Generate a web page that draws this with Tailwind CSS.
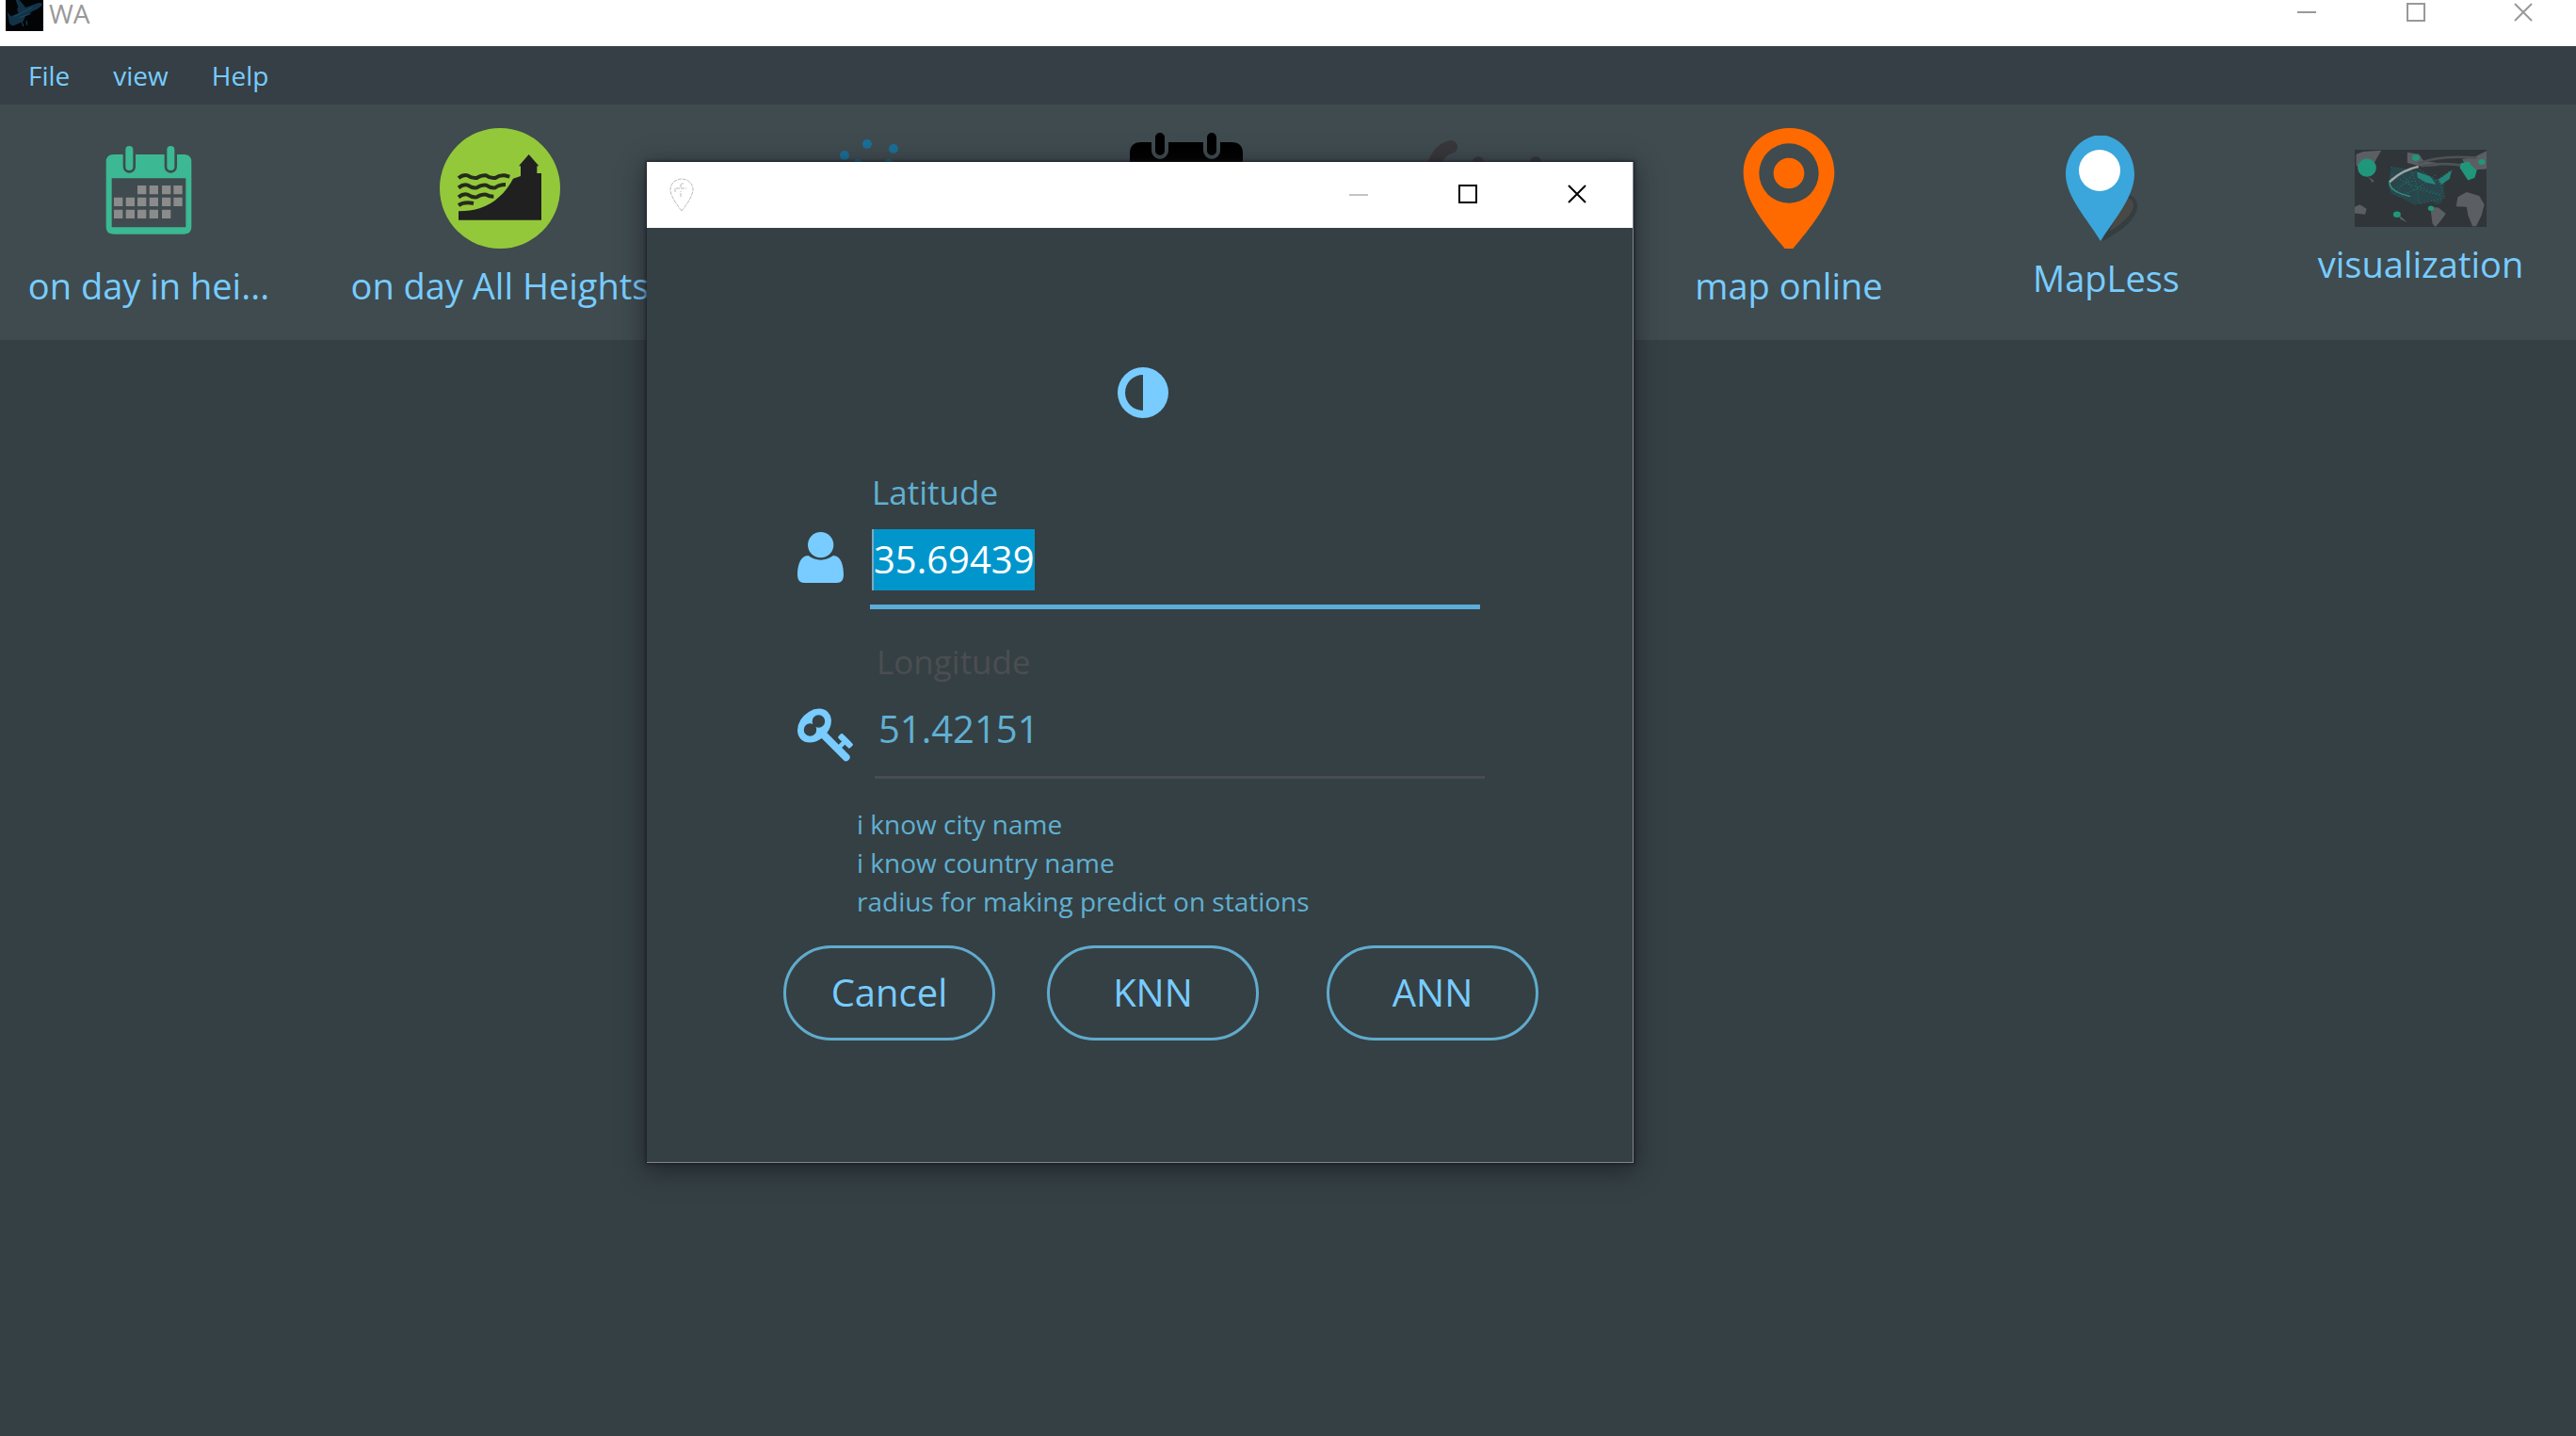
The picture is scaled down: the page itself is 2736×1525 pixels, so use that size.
<!DOCTYPE html>
<html lang="en">
<head>
<meta charset="utf-8">
<title>WA</title>
<script src="https://cdn.jsdelivr.net/npm/@tailwindcss/browser@4"></script>
</head>
<body class="min-h-screen overflow-x-hidden bg-[#354044] font-['Open_Sans','Noto_Sans',sans-serif] text-[#78ccff]">

<header class="flex h-[49px] items-start justify-between overflow-hidden bg-white text-[#999]">
  <div class="flex items-start gap-[6px] pl-[6px]">
    <svg class="h-[33px] w-[40px]" viewBox="0 0 120 99" aria-hidden="true">
      <rect width="120" height="99" fill="#020405"/>
      <path d="M5 38l12 14 24-10-5-12 4-8-8-22h12l20 24 38-14q16-4 14 4-3 10-30 22l-22 14-8 18-30 14q-10 0-14-8z" fill="#123247"/>
      <path d="M28 52l58-28M44 56l36-12M52 70l4 14M66 66l2 14" stroke="#1e4b63" stroke-width="3" fill="none"/>
    </svg>
    <h1 class="text-[28px] leading-[29px]">WA</h1>
  </div>
  <div class="flex">
    <button aria-label="Minimize" class="flex h-[26px] w-[116px] items-center justify-center"><svg class="h-5 w-5" viewBox="0 0 20 20" fill="none" stroke="currentColor" stroke-width="2"><path d="M0 10h20"/></svg></button>
    <button aria-label="Maximize" class="flex h-[26px] w-[116px] items-center justify-center"><svg class="h-5 w-5" viewBox="0 0 20 20" fill="none" stroke="currentColor" stroke-width="2"><path d="M1 1h18v18H1z"/></svg></button>
    <button aria-label="Close" class="flex h-[26px] w-[112px] items-center justify-center"><svg class="h-5 w-5" viewBox="0 0 20 20" fill="none" stroke="currentColor" stroke-width="2"><path d="M1 1l18 18M19 1L1 19"/></svg></button>
  </div>
</header>

<nav class="flex h-[62px] items-center gap-[46px] bg-[#363f45] pl-[30px] text-[28px]">
  <button>File</button>
  <button>view</button>
  <button>Help</button>
</nav>

<section aria-label="Tools" class="grid h-[250px] grid-cols-[316fr_430fr_352fr_324fr_310fr_336fr_338fr_330fr] items-center justify-items-center bg-[#3f4b4f] text-[38px] leading-[54px] whitespace-nowrap">
  <button class="flex flex-col items-center gap-3 pb-[6px]">
    <svg class="h-[128px] w-[128px]" viewBox="0 0 384 384" aria-hidden="true">
      <path fill-rule="evenodd" fill="#3cb892" d="M80 84h224q24 0 24 24v208q0 22-24 22H80q-24 0-24-22V108q0-24 24-24zM74 160v156h236V160z"/>
      <g stroke-linecap="round"><path d="M130 69v54M262 69v54" stroke="#3f4b4f" stroke-width="40"/><path d="M130 69v54M262 69v54" stroke="#3cb892" stroke-width="24"/></g>
      <path fill="#8b8b8b" d="M156 183h28v28h-28zM194 183h28v28h-28zM234 183h28v28h-28zM271 183h28v28h-28zM81 221h28v28H81zM119 221h28v28h-28zM156 221h28v28h-28zM194 221h28v28h-28zM234 221h28v28h-28zM271 221h28v28h-28zM81 260h28v28H81zM119 260h28v28h-28zM156 260h28v28h-28zM194 260h28v28h-28zM234 260h28v28h-28z"/>
    </svg>
    <span>on day in hei...</span>
  </button>
  <button class="flex flex-col items-center gap-3 pb-[6px]">
    <svg class="h-[128px] w-[128px]" viewBox="0 0 384 384" aria-hidden="true">
      <circle cx="192" cy="192" r="192" fill="#93c83a"/>
      <path fill="#202021" d="M60 265q84 0 132-48 24-22 42-56l24-8v-32h-6l32-37 32 37h-6v23h14v149H60z"/>
      <g fill="none" stroke="#262a1e" stroke-width="12"><path d="M60 159q15-12 29-8 14 10 29 8 15-10 30-8 14 10 29 8 15-10 30-8l16 4"/><path d="M60 190q15-12 29-8 14 10 29 8 15-10 30-8 14 10 29 8 12-10 33-10"/><path d="M60 220q15-12 29-8 14 10 29 8 15-10 30-8 10 6 24 6"/><path d="M60 246q18-12 48-6"/></g>
    </svg>
    <span>on day All Heights</span>
  </button>
  <button aria-label="Wind" class="pb-[72px]">
    <svg class="h-[128px] w-[128px]" viewBox="0 0 128 128" fill="#1b6f98" aria-hidden="true"><circle cx="39" cy="29" r="5"/><circle cx="63" cy="17" r="5"/><circle cx="91" cy="22" r="5"/><circle cx="53" cy="37" r="4"/><circle cx="86" cy="37" r="4"/><circle cx="106" cy="52" r="6"/><circle cx="22" cy="56" r="6"/></svg>
  </button>
  <button aria-label="Calendar" class="pb-[72px]">
    <svg class="h-[128px] w-[128px]" viewBox="0 0 128 128" aria-hidden="true">
      <path fill-rule="evenodd" d="M16 15h96q12 0 12 12v86q0 8-12 8H16q-12 0-12-8V27q0-12 12-12zM14 52v62h100V52z"/>
      <g stroke-linecap="round"><path d="M36 10v14M91 10v14" stroke="#3f4b4f" stroke-width="18"/><path d="M36 10v14M91 10v14" stroke="#000" stroke-width="10"/></g>
    </svg>
  </button>
  <button aria-label="Signal" class="pb-[72px]">
    <svg class="h-[128px] w-[128px]" viewBox="0 0 128 128" fill="#38383b" aria-hidden="true"><path d="M8 48Q12 24 28 20" fill="none" stroke="#38383b" stroke-width="14" stroke-linecap="round"/><circle cx="57" cy="36" r="6"/><circle cx="118" cy="36" r="6"/></svg>
  </button>
  <button class="flex flex-col items-center gap-3 pb-[6px]">
    <svg class="h-[128px] w-[128px]" viewBox="0 0 384 384" aria-hidden="true">
      <path fill-rule="evenodd" fill="#ff6a00" d="M160 4q34-8 68 0c66 14 109 72 109 138 0 84-74 174-132 242h-26C120 316 47 226 47 142 47 76 94 18 160 4zM192 49a95 95 0 1 0 0 190 95 95 0 0 0 0-190z"/>
      <circle cx="192" cy="144" r="49" fill="#ff6a00"/>
    </svg>
    <span>map online</span>
  </button>
  <button class="flex flex-col items-center gap-3 pb-[6px]">
    <svg class="h-[112px] w-[112px]" viewBox="0 0 112 112" aria-hidden="true">
      <path d="M71 62q18-1 18 14-2 18-37 36z" fill="#343e41"/><path d="M76 66q10 0 9 10-4 13-26 26z" fill="#484845"/>
      <path d="M44 0h12c18 4 30 22 30 41 0 24-22 49-36 71C37 90 13 65 13 41 13 22 26 4 44 0z" fill="#3aa6db"/>
      <ellipse cx="49" cy="37" rx="22" ry="22" fill="#fff"/>
    </svg>
    <span>MapLess</span>
  </button>
  <button class="flex flex-col items-center gap-3 pb-[6px]">
    <svg class="h-[82px] w-[140px]" viewBox="0 0 356 248" preserveAspectRatio="none" aria-hidden="true">
      <rect width="356" height="248" fill="#30353a"/>
      <g fill="#5b5f64"><path d="M4 14l20-8 48-4-14 28-8 20-30 16L4 50zM142 8l32 6 12 22 38 6v10l-44 2-38-12zM290 30l32-6 34-20v58l-50 4zM278 152l24-16 34 12 14 28-8 36-14 34h-10l-12-36-4-26-28-2zM204 184l22 2 20 20-14 22-14 20-8-10zM0 184l14-8 18 14-4 18-28-4zM36 86l16 14-4 6zM116 206l26 28-18-10z"/></g>
      <g fill="none" stroke="#4d5257"><path d="M172 44Q230 16 330 26M180 52q70-14 130 4" stroke-width="8"/></g>
      <path d="M98 56l54 8 40 14 24 16 14-2 16-4-4 28-6 50-12 10-18-12-20 6-24 8-34-22-28-14-10-24z" fill="#28464b"/>
      <g fill="none" stroke="#287067" stroke-width="3" stroke-dasharray="3 6"><path d="M98 56l54 10 14 42 8 66 70-20-16-50 36-38M100 80l44 30 90 34M98 130l50-28 90-4M110 140l60-80 50 40 40-34M124 72l36 60 60-52M118 150l50-24 74 24"/></g>
      <path d="M168 70l36 16 16 26-26-6-24-16zM226 96l36-30-6 28-22 18z" fill="#26857b"/>
      <path d="M94 104q32-38 78-50" fill="none" stroke="#a0a6a6" stroke-width="7"/>
      <path d="M94 104q-2 30 56 46" fill="none" stroke="#349485" stroke-width="4"/>
      <g fill="#20977a"><ellipse cx="33" cy="58" rx="25" ry="29"/><path d="M286 44l22-6 8 14 14 14-6 24-18 8-10-18-12-22z"/><circle cx="165" cy="26" r="10"/><circle cx="343" cy="39" r="9"/><circle cx="206" cy="188" r="8"/><circle cx="114" cy="208" r="10"/></g>
    </svg>
    <span>visualization</span>
  </button>
</section>

<div role="dialog" aria-label="Location" class="absolute top-[172px] left-[687px] w-[1048px] border-r border-b border-[#81878b] bg-[#354044] shadow-[0_6px_24px_2px_rgba(20,22,30,0.6),0_0_3px_1px_rgba(20,22,28,0.7)]">
  <div class="flex h-[70px] items-center justify-between bg-white text-black">
    <svg class="ml-[24px] h-[36px] w-[26px]" viewBox="0 0 26 36" fill="none" stroke="#b9b9b9" stroke-width="1" stroke-dasharray="4 1" aria-hidden="true"><path d="M13 35Q1 20 1 12 2 2 13 1q11 1 12 11 0 8-12 23z"/><path d="M6 15v-4h12M12 20V14M12 10V6h3"/></svg>
    <div class="flex pb-[2px]">
      <button aria-label="Minimize dialog" class="flex h-[68px] w-[116px] items-center justify-center text-[#c4c4c4]"><svg class="h-5 w-5" viewBox="0 0 20 20" fill="none" stroke="currentColor" stroke-width="2"><path d="M0 11h20"/></svg></button>
      <button aria-label="Maximize dialog" class="flex h-[68px] w-[115px] items-center justify-center"><svg class="h-5 w-5" viewBox="0 0 20 20" fill="none" stroke="currentColor" stroke-width="2"><path d="M1 1h18v18H1z"/></svg></button>
      <button aria-label="Close dialog" class="flex h-[68px] w-[118px] items-center justify-center"><svg class="h-5 w-5" viewBox="0 0 20 20" fill="none" stroke="currentColor" stroke-width="2"><path d="M1 1l18 18M19 1L1 19"/></svg></button>
    </div>
  </div>

  <form class="flex flex-col pt-[148px] pb-[129px]">
    <svg class="ml-[6px] h-[54px] w-[54px] self-center" viewBox="0 0 54 54" aria-hidden="true"><path fill="#78ccff" fill-rule="evenodd" d="M27 0a27 27 0 1 1 0 54 27 27 0 0 1 0-54zM27 8a19 19 0 0 0 0 38z"/></svg>

    <div class="mt-[55px] flex pl-[160px]">
      <svg class="mt-[66px] h-[54px] w-[49px]" viewBox="0 0 147 162" fill="#78ccff" aria-hidden="true"><circle cx="74" cy="41" r="41"/><path d="M34 75q40 28 80 0c24 0 33 30 33 62q0 25-22 25H22Q0 162 0 137C0 105 10 75 34 75z"/></svg>
      <div class="ml-[28px] flex w-[648px] flex-col items-start border-b-[5px] border-[#5baddb] pb-[15px] pl-[2px]">
        <label for="lat" class="text-[35px] leading-[48px] text-[#60b0d2]">Latitude</label>
        <input id="lat" type="text" value="35.69439" class="mt-[15px] field-sizing-content h-[65px] border-l-2 border-[#7aa9c4] bg-[#0096cc] pb-[2px] text-[40px] text-white outline-none">
      </div>
    </div>

    <div class="mt-[32px] flex pl-[160px]">
      <svg class="mt-[73px] h-[57px] w-[59px]" viewBox="0 128 1683 1592" fill="#78ccff" aria-hidden="true"><path d="M832 512q0-80-56-136t-136-56-136 56-56 136q0 42 19 83-41-19-83-19-80 0-136 56t-56 136 56 136 136 56 136-56 56-136q0-42-19-83 41 19 83 19 80 0 136-56t56-136zm851 704q0 17-49 66t-66 49q-9 0-28.500-16t-36.500-33-38.500-40-24.500-26l-96 96 220 220q28 28 28 68 0 42-39 81t-81 39q-40 0-68-28l-671-671q-176 131-365 131-163 0-265.500-102.500t-102.500-265.500q0-160 95-313t248-248 313-95q163 0 265.500 102.500t102.500 265.500q0 189-131 365l355 355 96-96q-3-3-26-24.500t-40-38.500-33-36.500-16-28.500q0-17 49-66t66-49q13 0 23 10 6 6 46 44.500t82 79.500 86.500 86 73 78 28.500 41z"/></svg>
      <div class="ml-[23px] flex w-[648px] flex-col items-start border-b-[3px] border-[#484d4f] pb-[17px] pl-[2px]">
        <label for="lon" class="text-[35px] leading-[48px] text-[#4b4e51]">Longitude</label>
        <input id="lon" type="text" value="51.42151" class="mt-[15px] h-[65px] w-full bg-transparent pb-[2px] pl-[2px] text-[40px] text-[#60b0d2] outline-none">
      </div>
    </div>

    <div class="mt-[28px] flex flex-col items-start pl-[223px] text-[28px] leading-[41px] text-[#60b0d2]">
      <a href="#city">i know city name</a>
      <a href="#country">i know country name</a>
      <a href="#radius">radius for making predict on stations</a>
    </div>

    <div class="mt-[26px] flex pl-[145px] text-[40px]">
      <button type="button" class="h-[101px] w-[225px] rounded-full border-[3px] border-[#60abcd] pb-[2px]">Cancel</button>
      <button type="button" class="ml-[55px] h-[101px] w-[225px] rounded-full border-[3px] border-[#60abcd] pb-[2px]">KNN</button>
      <button type="button" class="ml-[72px] h-[101px] w-[225px] rounded-full border-[3px] border-[#60abcd] pb-[2px]">ANN</button>
    </div>
  </form>
</div>
</body>
</html>
